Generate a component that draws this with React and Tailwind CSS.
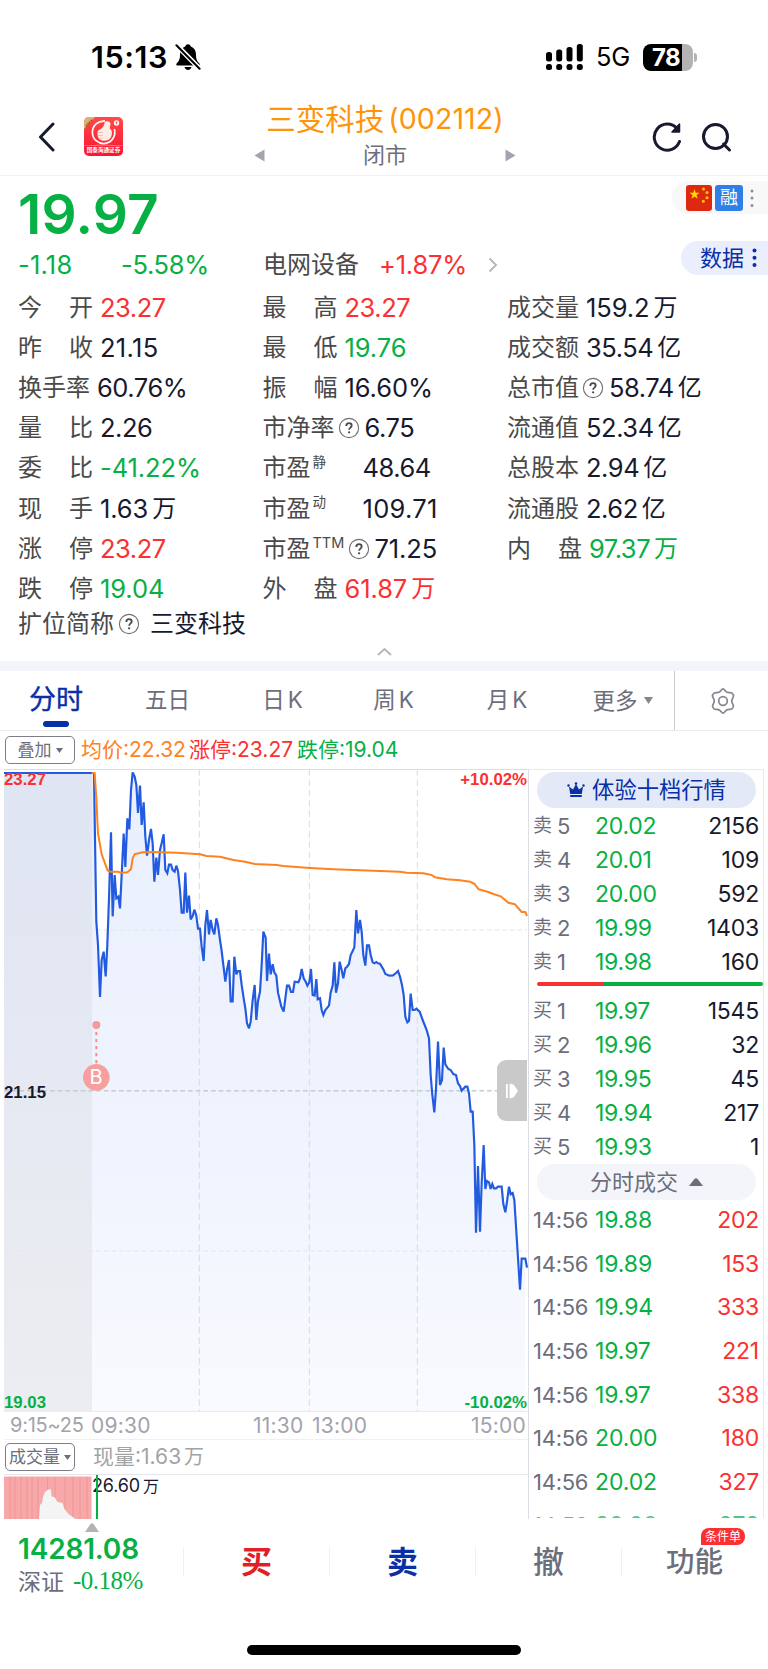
import React from 'react';

const PRICE =
  '12,24 282,24 284,160 289,470 294,540 300,696 305,585 311,560 317,634 322,540 327,400 333,202 338,454 344,330 349,400 355,395 360,430 365,330 371,206 376,306 382,160 388,193 393,75 398,22 404,35 409,60 414,144 420,62 425,180 431,112 436,215 441,272 447,225 453,192 458,235 463,350 469,278 474,330 480,255 486,230 491,208 496,315 502,325 507,299 513,299 518,315 524,320 529,302 534,318 540,375 545,443 551,443 556,323 561,443 567,392 572,463 578,453 583,434 589,452 594,491 600,491 605,545 611,588 616,480 621,435 627,508 632,465 638,495 643,508 649,460 654,480 660,525 665,558 670,600 676,650 681,615 687,585 692,709 698,709 703,575 709,628 714,618 720,618 725,660 731,700 736,730 741,775 747,790 752,770 758,705 764,660 769,765 774,708 780,680 785,600 790,500 797,518 801,648 807,566 812,628 818,598 823,622 829,632 834,683 844,725 851,740 856,700 861,662 867,662 873,681 879,681 884,650 895,652 900,640 905,612 911,640 917,650 922,662 928,652 933,612 938,690 944,692 949,642 953,703 960,700 965,735 970,750 976,735 987,722 992,683 998,662 1003,592 1008,683 1014,655 1019,590 1025,615 1030,640 1036,610 1041,605 1047,597 1052,570 1058,558 1063,547 1069,435 1074,505 1080,465 1085,500 1090,570 1096,602 1101,541 1107,541 1112,570 1118,592 1123,595 1129,591 1134,595 1140,596 1150,613 1156,627 1168,632 1179,631 1188,624 1194,618 1200,635 1206,660 1211,690 1216,755 1222,772 1227,767 1232,686 1238,735 1244,735 1249,731 1259,740 1268,765 1280,795 1287,820 1292,930 1297,990 1303,1042 1308,970 1314,830 1320,960 1326,945 1331,848 1336,898 1345,912 1352,915 1360,927 1368,930 1374,955 1380,963 1385,977 1396,965 1402,965 1407,985 1412,1040 1418,1040 1423,1140 1428,1403 1434,1203 1440,1400 1445,1255 1451,1140 1456,1272 1461,1248 1467,1252 1472,1272 1477,1257 1482,1270 1488,1270 1494,1265 1505,1265 1510,1317 1516,1342 1521,1310 1527,1265 1532,1288 1538,1284 1543,1305 1549,1400 1560,1574 1565,1481 1576,1481 1581,1508';
const AVERAGE =
  '275,24 284,24 289,100 294,205 305,268 323,317 330,320 355,320 362,324 382,322 393,313 398,280 404,268 428,262 460,261 530,263 600,268 620,273 660,275 700,285 735,290 765,297 830,300 850,303 930,309 1000,313 1200,320 1220,323 1270,325 1295,330 1305,337 1340,343 1380,346 1410,350 1424,357 1436,373 1465,381 1480,387 1502,394 1525,413 1545,418 1565,441 1576,441 1581,453';

const R = 'text-[#fb3030]';
const G = 'text-[#06b044]';
const K = 'text-[#171a2e]';

const COLS = [
  [
    ['今开', '23.27', R],
    ['昨收', '21.15', K],
    ['换手率', '60.76%', K],
    ['量比', '2.26', K],
    ['委比', '-41.22%', G],
    ['现手', '1.63', K, { unit: '万' }],
    ['涨停', '23.27', R],
    ['跌停', '19.04', G],
  ],
  [
    ['最高', '23.27', R],
    ['最低', '19.76', G],
    ['振幅', '16.60%', K],
    ['市净率', '6.75', K, { help: true }],
    ['市盈', '48.64', K, { sup: '静' }],
    ['市盈', '109.71', K, { sup: '动' }],
    ['市盈', '71.25', K, { sup: 'TTM', help: true }],
    ['外盘', '61.87', R, { unit: '万' }],
  ],
  [
    ['成交量', '159.2', K, { unit: '万' }],
    ['成交额', '35.54', K, { unit: '亿' }],
    ['总市值', '58.74', K, { unit: '亿', help: true }],
    ['流通值', '52.34', K, { unit: '亿' }],
    ['总股本', '2.94', K, { unit: '亿' }],
    ['流通股', '2.62', K, { unit: '亿' }],
    ['内盘', '97.37', G, { unit: '万' }],
  ],
];

const SELL = [['5', '20.02', '2156'], ['4', '20.01', '109'], ['3', '20.00', '592'], ['2', '19.99', '1403'], ['1', '19.98', '160']];
const BUY = [['1', '19.97', '1545'], ['2', '19.96', '32'], ['3', '19.95', '45'], ['4', '19.94', '217'], ['5', '19.93', '1']];
const TRADES = [['19.88', '202'], ['19.89', '153'], ['19.94', '333'], ['19.97', '221'], ['19.97', '338'], ['20.00', '180'], ['20.02', '327']];

function Help() {
  return (
    <svg className="h-[22px] w-[22px] shrink-0" viewBox="0 0 22 22" fill="none">
      <circle cx="11" cy="11" r="9.6" stroke="#6f6f6f" strokeWidth="1.100" />
      <path d="M8.300 8.900c0-1.700 1.100-2.700 2.700-2.700s2.700 1 2.700 2.400c0 2-2.600 2.100-2.600 4.200" stroke="#4a4a4a" strokeWidth="1.800" />
      <circle cx="11.100" cy="15.300" r="1.150" fill="#4a4a4a" />
    </svg>
  );
}

// Narrow figures such as "1" need a little more air than the wide ones.
function figureTracking(value) {
  const ones = value.split('1').length - 1;
  return ones > 1 ? 'tracking-[0.012em]' : ones === 1 ? 'tracking-[-0.004em]' : 'tracking-[-0.018em]';
}

function Stat({ item }) {
  const [label, value, color, opt = {}] = item;
  const spread = label.length === 2 && !opt.sup;
  return (
    <div className="flex h-[40.1px] items-center whitespace-nowrap leading-[40px]">
      {spread ? (
        <span className="flex w-[75px] justify-between text-[24px] text-[#4a4a4a]">
          <span>{label[0]}</span>
          <span>{label[1]}</span>
        </span>
      ) : (
        <span className="text-[24px] text-[#4a4a4a]">{label}</span>
      )}
      {opt.sup && (
        <span className={opt.sup === 'TTM' ? 'ml-[2px] mt-[-12px] w-[32px] text-[14.5px] text-[#4a4a4a]' : 'ml-[2px] mt-[-13px] w-[43px] text-[13.5px] text-[#4a4a4a]'}>
          {opt.sup}
        </span>
      )}
      {opt.help && <span className="ml-[3px] flex"><Help /></span>}
      <span className={`${opt.help ? 'ml-[5px]' : 'ml-[7px]'} text-[25.5px] ${figureTracking(value)} ${color}`}>{value}</span>
      {opt.unit && <span className={`ml-[4px] text-[24px] ${color}`}>{opt.unit}</span>}
    </div>
  );
}

function Quote({ side, row }) {
  return (
    <div className="flex h-[33.9px] items-center pl-[4px] pr-[4px] leading-[34px]">
      <span className="w-[24px] text-[19px] text-[#6c6e7c]">{side}</span>
      <span className="w-[38px] text-[22px] text-[#6c6e7c]">{row[0]}</span>
      <span className="text-[23px] tracking-[-0.012em] text-[#06b044]">{row[1]}</span>
      <span className="ml-auto text-[23px] tracking-[-0.01em] text-[#171a2e]">{row[2]}</span>
    </div>
  );
}

function Trade({ time, price, volume, up }) {
  return (
    <div className="flex h-[43.6px] items-center pl-[4px] pr-[4px] leading-[43px]">
      <span className="w-[62px] text-[22px] tracking-[-0.012em] text-[#6c6e7c]">{time}</span>
      <span className="text-[23px] tracking-[-0.005em] text-[#06b044]">{price}</span>
      <span className={`ml-auto text-[23px] tracking-[-0.01em] ${up ? 'text-[#fb3030]' : 'text-[#06b044]'}`}>{volume}</span>
    </div>
  );
}

function StatusBar() {
  return (
    <div className="flex h-[103px] items-end pb-[28px] pl-[91px] pr-[71px] text-black">
      <div className="flex h-[36px] items-center">
        <span className="w-[84px] text-[30.5px] font-semibold leading-[36px] tracking-[0.018em]">15:13</span>
        <svg className="h-[28px] w-[26px]" viewBox="0 0 26 28">
          <path d="M13 1.2c-1.600 0-2.600 1-2.800 2.300C6.900 4.600 5 7.500 5 11.500c0 5-1.200 7-3.200 8.700-1.100 1-.6 2.300.8 2.300h20.800c1.400 0 1.900-1.300.8-2.300-2-1.700-3.200-3.700-3.200-8.700 0-4-1.900-6.900-5.200-8C15.600 2.200 14.600 1.200 13 1.200z" />
          <path d="M9.500 24h7c-.4 1.700-1.700 2.900-3.500 2.900S9.900 25.700 9.500 24z" />
          <path d="M1 1.500L25 26" stroke="#fff" strokeWidth="5" />
          <path d="M1.400 2.200L24.600 25.800" stroke="#000" strokeWidth="2" strokeLinecap="round" />
        </svg>
      </div>
      <div className="ml-auto flex h-[36px] items-center">
        <svg className="h-[28px] w-[40px]" viewBox="0 0 40 28">
          <rect x="1" y="9" width="6" height="9.500" rx="2.500" />
          <rect x="11.200" y="6.500" width="6" height="12" rx="2.500" />
          <rect x="21.500" y="4" width="6" height="14.500" rx="2.500" />
          <rect x="31.800" y="1" width="6" height="17.500" rx="2.500" />
          <rect x="1" y="21" width="6" height="6" rx="2.500" />
          <rect x="11.200" y="21" width="6" height="6" rx="2.500" />
          <rect x="21.500" y="21" width="6" height="6" rx="2.500" />
          <rect x="31.800" y="21" width="6" height="6" rx="2.500" />
        </svg>
        <span className="ml-[11px] w-[47px] text-[25.5px] leading-[36px] tracking-[-0.01em]">5G</span>
        <div className="flex h-[27px] w-[50px] items-center overflow-hidden rounded-[8px] bg-[linear-gradient(90deg,#000_78%,#b3b3b3_78%)]">
          <span className="w-[50px] pl-[9px] text-[24px] font-bold leading-[27px] tracking-[-0.03em] text-white">78</span>
        </div>
        <div className="ml-[1px] h-[9px] w-[3px] rounded-r-full bg-[#b3b3b3]" />
      </div>
    </div>
  );
}

function Header() {
  return (
    <div className="flex h-[73px] items-start border-b border-[#f1f1f1] pl-[38px] pr-[36px]">
      <svg className="mt-[19px] h-[30px] w-[17px]" viewBox="0 0 17 30" fill="none">
        <path d="M15 2L2.500 15L15 28" stroke="#171a2e" strokeWidth="3" strokeLinecap="round" strokeLinejoin="round" />
      </svg>
      <div className="relative ml-[29px] mt-[14px] flex h-[39px] w-[39px] flex-col overflow-hidden rounded-[5px] bg-[linear-gradient(180deg,#ff4a48,#fb1432)]">
        <svg className="h-[29px] w-[39px] shrink-0" viewBox="0 0 39 29">
          <path d="M0 0h11L0 12z" fill="#dfb172" />
          <path d="M2 9L8 2.500" stroke="#8d5a2c" strokeWidth="1.800" strokeDasharray="1.500 .8" />
          <path d="M21 4.200A11.200 11.200 0 1 0 30.300 12" fill="none" stroke="#fff" strokeWidth="1.700" />
          <path d="M13.500 15c.3-1.800 1.800-2.300 3.500-3.200 2.500-1.300 3-3.500 3.500-6 .6-2.300 6-2.200 6 1.200 0 1.800-.8 3-.8 4.500 1.500.8 2.300 2.500 2.200 5-.2 4.500-3 7-7 7.300-4.500.3-7.900-2-7.400-8.800z" fill="#fbeee6" />
          <path d="M14 15.500h5M14 18.500h5M15 21.300h4" stroke="#f3b6a8" strokeWidth=".8" />
          <circle cx="32.500" cy="6" r="2.700" fill="#fff" />
          <path d="M32.500 4.500v3M31.500 5.300h2" stroke="#fb3a40" strokeWidth=".7" />
          <path d="M0 29Q19.500 27 39 29" fill="none" stroke="#ff9a94" strokeWidth=".8" />
        </svg>
        <span className="w-full text-center text-[5.600px] font-bold leading-[9px] text-white">国泰海通证券</span>
      </div>
      <div className="ml-[131px] flex w-[262px] flex-col items-center">
        <div className="mt-[-4px] flex h-[40px] items-center whitespace-nowrap text-[#ff9408]">
          <span className="text-[29.500px] leading-[40px]">三变科技</span>
          <span className="ml-[4px] text-[28.5px] leading-[40px] tracking-[0.004em]">(002112)</span>
        </div>
        <div className="mt-[1px] flex h-[30px] w-full items-center justify-between text-[#6c6e7c]">
          <svg className="h-[13px] w-[11px]" viewBox="0 0 11 13"><path d="M10.500 .5v12L.5 6.500z" fill="#a3a4ad" /></svg>
          <span className="text-[22px] leading-[30px]">闭市</span>
          <svg className="h-[13px] w-[11px]" viewBox="0 0 11 13"><path d="M.5 .5v12l10-6z" fill="#a3a4ad" /></svg>
        </div>
      </div>
      <svg className="ml-auto mt-[18px] h-[32px] w-[32px]" viewBox="0 0 32 32" fill="none" stroke="#171a2e" strokeWidth="3" strokeLinecap="round">
        <path d="M28.500 20.500A13 13 0 1 1 26 7.500" />
        <path d="M28.500 3v8h-7.500z" fill="#171a2e" strokeWidth="1.500" strokeLinejoin="round" />
      </svg>
      <svg className="ml-[18px] mt-[19px] h-[31px] w-[31px]" viewBox="0 0 31 31" fill="none" stroke="#171a2e" strokeWidth="3" strokeLinecap="round">
        <circle cx="14.500" cy="14.500" r="12" />
        <path d="M22.500 22l6 6" />
      </svg>
    </div>
  );
}

function Summary() {
  return (
    <div className="flex h-[112px]">
      <div className="flex w-[263px] flex-col pl-[18px]">
        <span className="mt-[5px] h-[66px] text-[55px] font-semibold leading-[66px] tracking-[0.005em] text-[#06b044]">19.97</span>
        <div className="mt-[3px] flex h-[30px] items-center text-[25.5px] leading-[30px] text-[#06b044]">
          <span className="w-[103px] tracking-[0.008em]">-1.18</span>
          <span className="tracking-[-0.012em]">-5.58%</span>
        </div>
      </div>
      <div className="mt-[72px] flex h-[34px] w-[389px] items-center leading-[34px]">
        <span className="text-[24px] text-[#4a4a4a]">电网设备</span>
        <span className="ml-[20px] text-[25.5px] tracking-[-0.008em] text-[#fb3030]">+1.87%</span>
        <svg className="ml-[21px] h-[16px] w-[10px]" viewBox="0 0 10 16" fill="none"><path d="M1.500 1.500l6.500 6.500-6.500 6.500" stroke="#b9b9b9" strokeWidth="2" /></svg>
      </div>
      <div className="flex flex-1 flex-col items-end">
        <div className="mt-[5px] flex h-[33px] w-[96px] items-center rounded-l-full bg-[#f8f8f9] pl-[14px]">
          <svg className="h-[26px] w-[26px]" viewBox="0 0 26 26">
            <rect width="26" height="26" rx="3" fill="#de2910" />
            <path d="M8.500 4l1.200 3.700h3.900l-3.100 2.300 1.200 3.700-3.200-2.300-3.100 2.300L6.600 10 3.500 7.700h3.900z" fill="#ffde00" />
            <g fill="#ffc800"><circle cx="17.500" cy="4" r="1.500" /><circle cx="21" cy="7.500" r="1.500" /><circle cx="21" cy="12.700" r="1.500" /><circle cx="17.300" cy="16.300" r="1.500" /></g>
          </svg>
          <span className="ml-[3px] flex h-[26px] w-[28px] items-center justify-center rounded-[3px] bg-[#2e7fe6] text-[18px] leading-[26px] text-white">融</span>
          <svg className="ml-[7px] h-[20px] w-[4px]" viewBox="0 0 4 20" fill="#8e8e8e"><circle cx="2" cy="3" r="1.500" /><circle cx="2" cy="10" r="1.500" /><circle cx="2" cy="17.500" r="1.500" /></svg>
        </div>
        <div className="mt-[27px] flex h-[34px] w-[87px] items-center rounded-l-full bg-[#ebeffd] pl-[19px] text-[22px] leading-[34px] text-[#0a30a8]">
          数据
          <svg className="ml-[8px] h-[20px] w-[5px]" viewBox="0 0 5 20" fill="#0a30a8"><circle cx="2.500" cy="2.500" r="2" /><circle cx="2.500" cy="9.800" r="2" /><circle cx="2.500" cy="17" r="2" /></svg>
        </div>
      </div>
    </div>
  );
}

function KTab({ unit, className }) {
  return (
    <span className={`flex justify-center gap-[3px] ${className}`}>
      <span>{unit}</span>
      <span>K</span>
    </span>
  );
}

function Tabs() {
  return (
    <div className="flex h-[60px] border-b border-[#ececee] text-[22.5px] leading-[58px] text-[#6c6e7c]">
      <div className="flex w-[112px] flex-col items-center">
        <span className="h-[50px] text-[27px] text-[#0a30a8] [-webkit-text-stroke:0.4px_#0a30a8]">分时</span>
        <span className="h-[6px] w-[26px] rounded-[3px] bg-[#0a30a8]" />
      </div>
      <span className="w-[111px] text-center">五日</span>
      <KTab unit="日" className="w-[119px]" />
      <KTab unit="周" className="w-[103px]" />
      <KTab unit="月" className="w-[124px]" />
      <span className="flex w-[105px] items-center justify-center pl-[2px]">
        更多
        <svg className="ml-[6px] h-[7px] w-[9px]" viewBox="0 0 9 7"><path d="M0 0h9L4.500 7z" fill="#85868f" /></svg>
      </span>
      <span className="flex flex-1 items-center justify-center border-l border-[#c9c9ce] pl-[2px]">
        <svg className="h-[28px] w-[28px]" viewBox="0 0 28 28" fill="none" stroke="#85868f" strokeWidth="1.700" strokeLinejoin="round">
          <path d="M14 1.800c1.300 0 2.300 2.500 3.700 3.300 1.500.8 4.200.1 5.300 1 1.200 1 1.700 2.300 1.400 3.400-.4 1.400-1.700 2.900-1.700 4.500s1.300 3.100 1.700 4.500c.3 1.100-.2 2.400-1.400 3.400-1.100.9-3.800.2-5.300 1-1.400.8-2.400 3.300-3.700 3.300s-2.300-2.500-3.700-3.300c-1.500-.8-4.200-.1-5.300-1-1.200-1-1.700-2.300-1.400-3.400.4-1.400 1.700-2.900 1.700-4.500S4 10.900 3.600 9.500C3.300 8.400 3.800 7.100 5 6.100c1.100-.9 3.800-.2 5.300-1C11.700 4.300 12.700 1.800 14 1.800z" />
          <circle cx="14" cy="14" r="4.300" />
        </svg>
      </span>
    </div>
  );
}

function Picker({ children }) {
  return (
    <span className="flex h-[28px] w-[70px] shrink-0 items-center justify-center rounded-[5px] border border-[#7d7e89] text-[17px] leading-[26px] text-[#6c6e7c]">
      {children}
      <svg className="ml-[4px] h-[5px] w-[7px] shrink-0" viewBox="0 0 7 5"><path d="M0 0h7L3.500 5z" fill="#6c6e7c" /></svg>
    </span>
  );
}

function Chart() {
  return (
    <div className="relative h-[643px] w-[525px]">
      <svg className="block h-[643px] w-[525px]" viewBox="12 12 1575 1929">
        <defs>
          <linearGradient id="area" x1="0" y1="0" x2="0" y2="1">
            <stop offset="0" stopColor="#e9effd" />
            <stop offset=".6" stopColor="#f0f4fe" />
            <stop offset="1" stopColor="#f9fafe" />
          </linearGradient>
          <linearGradient id="auction" x1="0" y1="0" x2="0" y2="1">
            <stop offset="0" stopColor="#dfe5f3" />
            <stop offset="1" stopColor="#ecedf1" />
          </linearGradient>
        </defs>
        <polygon points={`${PRICE} 1575,1508 1575,1941 12,1941`} fill="url(#area)" />
        <rect x="12" y="24" width="264" height="1917" fill="url(#auction)" />
        <g stroke="#d9dbe2" strokeWidth="3" strokeDasharray="20 11">
          <path d="M598 12V1941M928 12V1941M1252 12V1941" />
          <path d="M12 495H1581M12 1458H1581" stroke="#e3e5ea" strokeDasharray="14 9" />
        </g>
        <path d="M12 977H1581" stroke="#c6cbd5" strokeWidth="4.500" strokeDasharray="14 9" />
        <path d="M12 13.500H1587" stroke="#dcdee2" strokeWidth="3" />
        <path d="M12 1939H1587" stroke="#e9eaee" strokeWidth="3" />
        <path d="M1585.500 12V1941" stroke="#dcdee6" strokeWidth="3" />
        <polyline points={PRICE} fill="none" stroke="#235be0" strokeWidth="6.500" strokeLinejoin="miter" strokeMiterlimit="3" />
        <polyline points={AVERAGE} fill="none" stroke="#ff821e" strokeWidth="6" strokeLinejoin="round" />
        <path d="M289 780V935" stroke="#f58e8e" strokeWidth="6" strokeDasharray="10 11" />
        <circle cx="289" cy="780" r="12" fill="#f49a9c" />
        <circle cx="289" cy="937" r="40" fill="#f79f9f" />
      </svg>
      <span className="absolute left-[81px] top-[296px] w-[22px] text-center text-[20px] leading-[24px] text-white">B</span>
      <span className="absolute left-0 top-[2px] font-['Liberation_Sans'] text-[16.8px] font-bold leading-[18px] text-[#fb3030]">23.27</span>
      <span className="absolute right-[2px] top-[2px] font-['Liberation_Sans'] text-[16.8px] font-bold leading-[18px] text-[#fb3030]">+10.02%</span>
      <span className="absolute left-0 top-[315px] font-['Liberation_Sans'] text-[16.8px] font-bold leading-[18px] text-[#171a2e]">21.15</span>
      <span className="absolute bottom-0 left-0 font-['Liberation_Sans'] text-[16.8px] font-bold leading-[18px] text-[#06b044]">19.03</span>
      <span className="absolute bottom-0 right-[2px] font-['Liberation_Sans'] text-[16.8px] font-bold leading-[18px] text-[#06b044]">-10.02%</span>
      <span className="absolute right-[2px] top-[291px] flex h-[61px] w-[30px] items-center justify-center rounded-l-[9px] bg-[#c9c9ca]">
        <svg className="h-[16px] w-[14px]" viewBox="0 0 14 16" fill="#fff"><path d="M1 1h1.800v14H1zM4.600 .5L8.500 1.500l4.500 6.500-4.500 6.500-3.900 1z" /></svg>
      </span>
    </div>
  );
}

function Volume() {
  return (
    <div className="flex h-[44px]">
      <svg className="h-[44px] w-[88px]" viewBox="0 0 88 44">
        <rect y="1.500" width="87.500" height="42.500" fill="#f7a8a8" />
        <path d="M6 2v42M11 2v42M17 2v42M23 2v42M28 2v42M34 2v42M43.500 2v42M51 2v42M61 2v42M69 2v42M76 2v42M83 2v42" stroke="#f29595" strokeWidth="1" />
        <path d="M35 44l1-14 2-2 1-6 2-5 3-2.500h3l.5 7 3 .5 3 5 5 1 2 6 4 5 7 5z" fill="#f4f4f5" />
      </svg>
      <div className="relative flex-1">
        <span className="absolute left-[4px] top-0 h-[44px] w-[1.5px] bg-[#06b044]" />
        <span className="flex items-center pt-[1px] text-[18px] leading-[20px] tracking-[-0.01em] text-[#171a2e]">26.60<span className="ml-[3px] text-[16px]">万</span></span>
      </div>
    </div>
  );
}

function OrderBook() {
  return (
    <div className="h-[749px] w-[235px] overflow-hidden border-r border-t border-[#e9e9ec]">
      <div className="ml-[8px] mt-[2px] flex h-[36px] w-[219px] items-center justify-center rounded-full bg-[#e3e9f6] text-[22.3px] leading-[36px] text-[#0a30a8]">
        <svg className="mr-[7px] h-[16px] w-[18px]" viewBox="0 0 18 16" fill="#0a30a8">
          <path d="M2 4.500l4 3L9 2l3 5.500 4-3-1.200 7.500H3.200zM3.200 13h11.600v2H3.200z" />
          <circle cx="1.500" cy="3.500" r="1.200" /><circle cx="9" cy="1.500" r="1.300" /><circle cx="16.500" cy="3.500" r="1.200" />
        </svg>
        体验十档行情
      </div>
      <div className="mt-[1px]">{SELL.map((r) => <Quote key={r[0]} side="卖" row={r} />)}</div>
      <div className="ml-[8px] mt-[4px] flex h-[4px] overflow-hidden rounded-full">
        <span className="w-[67px] bg-[#fb3030]" />
        <span className="flex-1 bg-[#06b044]" />
      </div>
      <div className="mt-[8px]">{BUY.map((r) => <Quote key={r[0]} side="买" row={r} />)}</div>
      <div className="ml-[8px] flex h-[36px] w-[219px] items-center justify-center rounded-full bg-[#f4f5fa] text-[22px] leading-[36px] text-[#6c6e7c]">
        分时成交
        <svg className="ml-[11px] h-[8px] w-[14px]" viewBox="0 0 14 8"><path d="M0 8h14L9 1.500Q7-.8 5 1.500z" fill="#6c6e7c" /></svg>
      </div>
      <div className="mt-[-1px]">
        {TRADES.map((t, i) => <Trade key={i} time="14:56" price={t[0]} volume={t[1]} up />)}
        <div className="opacity-70"><Trade time="14:58" price="20.00" volume="272" /></div>
      </div>
    </div>
  );
}

function BottomBar() {
  return (
    <div className="relative flex h-[150px] flex-col">
      <svg className="absolute left-[85px] top-[4px] h-[9px] w-[14px]" viewBox="0 0 14 9"><path d="M0 9h14L8.500 1Q7-.5 5.500 1z" fill="#b3b3b5" /></svg>
      <div className="flex h-[88px]">
        <div className="flex w-[183px] flex-col pl-[18px]">
          <span className="mt-[13px] h-[34px] text-[28px] font-semibold leading-[34px] tracking-[-0.006em] text-[#06b044]">14281.08</span>
          <span className="flex h-[32px] items-center text-[23px] leading-[32px] text-[#6c6e7c]">
            深证
            <span className="ml-[9px] mt-[-3px] font-['Liberation_Serif'] text-[25px] tracking-[-0.02em] text-[#06b044]">-0.18%</span>
          </span>
        </div>
        {[['买', 'text-[31px] font-bold text-[#e01f28]'], ['卖', 'text-[31px] font-bold text-[#0a30a8]'], ['撤', 'text-[31px] font-medium text-[#6c6e7c]'], ['功能', 'text-[28.5px] font-medium text-[#6c6e7c]']].map(([t, c]) => (
          <div key={t} className="relative mt-[28px] flex h-[29px] w-[146px] items-center justify-center border-l border-[#eff0f5]">
            <span className={`whitespace-nowrap leading-[29px] ${c}`}>{t}</span>
            {t === '功能' && (
              <span className="absolute left-[79px] top-[-19px] flex h-[17px] w-[44px] items-center justify-center rounded-[8px] rounded-bl-none bg-[#fb3030] text-[12px] leading-[17px] text-white">条件单</span>
            )}
          </div>
        ))}
      </div>
      <div className="mx-auto mt-[38px] h-[10px] w-[274px] rounded-full bg-black" />
    </div>
  );
}

export default function App() {
  return (
    <div className="h-[1669px] w-[768px] overflow-hidden bg-white font-['Inter','Noto_Sans_CJK_SC',sans-serif]">
      <StatusBar />
      <Header />
      <Summary />
      <div className="flex h-[321px] pl-[18px]">
        {COLS.map((col, i) => (
          <div key={i} className={i < 2 ? 'w-[244.5px]' : 'flex-1'}>
            {col.map((item, j) => <Stat key={j} item={item} />)}
          </div>
        ))}
      </div>
      <div className="flex h-[30px] items-center pl-[18px] text-[24px] leading-[30px] text-[#4a4a4a]">
        扩位简称<span className="ml-[4px] flex"><Help /></span>
        <span className="ml-[10px] text-[#171a2e]">三变科技</span>
      </div>
      <div className="flex h-[22px] justify-center">
        <svg className="mt-[8px] h-[9px] w-[15px]" viewBox="0 0 15 9" fill="none"><path d="M1 8l6.500-6L14 8" stroke="#b5b5b5" strokeWidth="1.800" /></svg>
      </div>
      <div className="h-[10px] bg-[#f4f5fa]" />
      <Tabs />
      <div className="flex h-[38px] items-center pl-[5px] text-[21px] leading-[38px]">
        <Picker>叠加</Picker>
        <span className="ml-[6px] w-[108px] whitespace-nowrap text-[#ff821e]">均价:22.32</span>
        <span className="w-[108px] whitespace-nowrap text-[#fb3030]">涨停:23.27</span>
        <span className="whitespace-nowrap text-[#06b044]">跌停:19.04</span>
      </div>
      <div className="flex h-[750px] pl-[4px]">
        <div className="w-[525px] border-r border-[#dcdee6]">
          <Chart />
          <div className="flex h-[28px] items-center border-b border-[#f0f0f2] text-[21px] leading-[27px] tracking-[0.01em] text-[#a2a3ab]">
            <span className="w-[87px] pl-[6px] text-[20px] tracking-[-0.012em]">9:15~25</span>
            <span className="w-[162px]">09:30</span>
            <span className="w-[59px]">11:30</span>
            <span>13:00</span>
            <span className="ml-auto pr-[2px]">15:00</span>
          </div>
          <div className="flex h-[35px] items-center border-b border-[#e6e7ee] pl-[1px] text-[21px] leading-[34px] text-[#a2a3a6]">
            <Picker>成交量</Picker>
            <span className="ml-[18px]">现量:1.63</span>
            <span className="ml-[3px] text-[20px]">万</span>
          </div>
          <Volume />
        </div>
        <OrderBook />
      </div>
      <BottomBar />
    </div>
  );
}
